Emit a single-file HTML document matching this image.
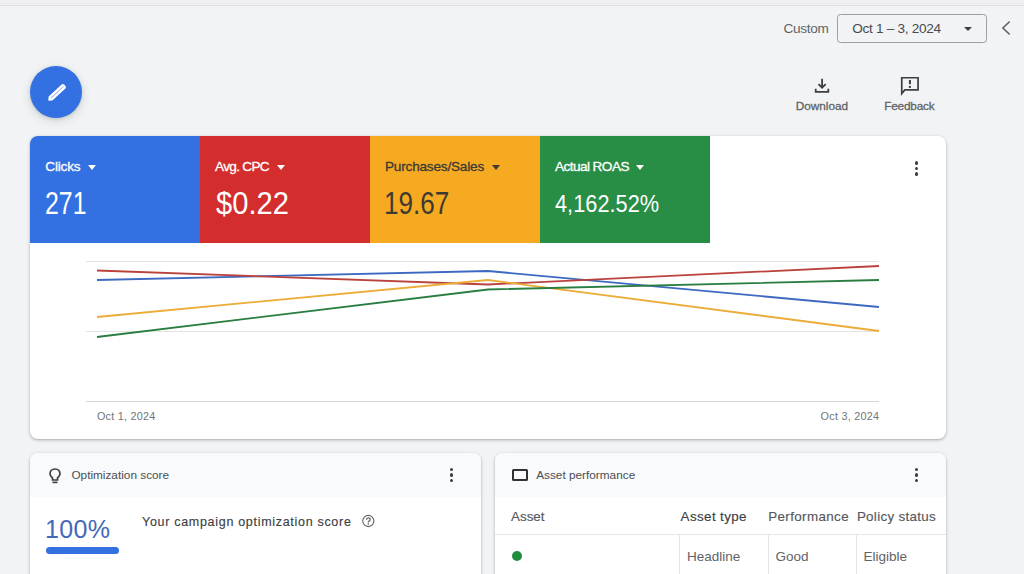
<!DOCTYPE html>
<html><head><meta charset="utf-8">
<style>
*{box-sizing:border-box;margin:0;padding:0}
html,body{width:1024px;height:574px;overflow:hidden;background:#f1f3f4;font-family:"Liberation Sans",sans-serif;position:relative}
.a{position:absolute;white-space:nowrap}
.t{position:absolute;white-space:nowrap;line-height:1}
.m{-webkit-text-stroke:0.3px currentColor}
.m2{-webkit-text-stroke:0.15px currentColor}
#topline{left:0;top:5px;width:1024px;height:1px;background:#dfe0e3}
#topband{left:0;top:0;width:1024px;height:5px;background:#f0f0f2}
.card{position:absolute;background:#fff;border-radius:8px;box-shadow:0 1px 2px rgba(60,64,67,.25),0 1px 3px 1px rgba(60,64,67,.12);overflow:hidden}
.tile{position:absolute;top:0;width:170px;height:107px}
.kebab{position:absolute;width:4px;height:15px}
.kebab i{position:absolute;left:0.2px;width:3.7px;height:3.7px;border-radius:50%;background:#3c4043}
.tri{position:absolute;width:0;height:0;border-left:4.5px solid transparent;border-right:4.5px solid transparent;border-top:5px solid #fff}
</style></head><body>
<div class="a" id="topband"></div>
<div class="a" id="topline"></div>
<div class="a" style="left:0;top:3px;width:1024px;height:1px;background:#ebebed"></div>

<!-- date picker -->
<div class="t" style="left:783.5px;top:22px;font-size:13.6px;color:#5f6368;letter-spacing:-0.3px">Custom</div>
<div class="a" style="left:837px;top:14px;width:150px;height:29px;border:1px solid #9aa0a6;border-radius:3.5px"></div>
<div class="t" style="left:852.3px;top:22px;font-size:13.6px;color:#474b4f;letter-spacing:-0.3px">Oct 1 – 3, 2024</div>
<div class="tri" style="left:964.3px;top:26.8px;border-top-color:#3c4043;border-left-width:4px;border-right-width:4px;border-top-width:4.5px"></div>
<svg class="a" style="left:998px;top:18px" width="18" height="20" viewBox="0 0 18 20"><path d="M11.7 3.5 L4.9 10 L11.7 16.5" fill="none" stroke="#5f6368" stroke-width="1.6"/></svg>

<!-- FAB -->
<div class="a" style="left:30px;top:66px;width:52px;height:52px;border-radius:50%;background:#3370e2;box-shadow:0 1px 3px rgba(60,64,67,.22),0 3px 8px 2px rgba(60,64,67,.1)"></div>
<svg class="a" style="left:44px;top:80px" width="26" height="26" viewBox="0 0 26 26"><g transform="translate(12.5,13) rotate(-43)"><path d="M-11.2 0 L-8.2 -2.7 H9.6 Q11.3 -2.7 11.3 -1 V1 Q11.3 2.7 9.6 2.7 H-8.2 Z" fill="#fff"/><path d="M-7.5 0 H9.5" stroke="#6a93e6" stroke-width="0.8"/></g></svg>

<!-- download / feedback -->
<svg class="a" style="left:813px;top:77px" width="18" height="18" viewBox="0 0 18 18"><path d="M9.1 1.8 V10.8 M5.5 7.1 L9.1 10.7 L12.7 7.1" fill="none" stroke="#3c4043" stroke-width="1.8"/><path d="M2.7 11.8 V14.8 H15.3 V11.8" fill="none" stroke="#3c4043" stroke-width="1.8"/></svg>
<div class="t m" style="left:795.7px;top:101.1px;font-size:11.8px;color:#5f6368">Download</div>
<svg class="a" style="left:899px;top:76px" width="21" height="21" viewBox="0 0 21 21"><path d="M2.75 17.6 V1.75 H19.05 V13.95 H5.8 Z" fill="none" stroke="#3c4043" stroke-width="1.7" stroke-linejoin="miter"/><rect x="9.9" y="4" width="2" height="4.2" fill="#3c4043"/><rect x="9.9" y="9.9" width="2" height="2" fill="#3c4043"/></svg>
<div class="t m" style="left:884.2px;top:101.1px;font-size:11.8px;color:#5f6368;letter-spacing:-0.2px">Feedback</div>

<!-- main card -->
<div class="card" style="left:30px;top:136px;width:916px;height:303px">
  <div class="tile" style="left:0;background:#3370e2"></div>
  <div class="tile" style="left:170px;background:#d42d2e"></div>
  <div class="tile" style="left:340px;background:#f5aa22"></div>
  <div class="tile" style="left:510px;background:#288d45"></div>
</div>
<div class="t m" style="left:45.3px;top:159.8px;font-size:13.6px;color:#fff;letter-spacing:-0.2px">Clicks</div>
<div class="tri" style="left:88px;top:165px"></div>
<div class="t" style="left:45px;top:187.8px;font-size:30.5px;color:#fff;transform:scaleX(0.815);transform-origin:0 0">271</div>
<div class="t m" style="left:215.1px;top:159.8px;font-size:13.6px;color:#fff;letter-spacing:-0.7px">Avg. CPC</div>
<div class="tri" style="left:276.5px;top:165px"></div>
<div class="t" style="left:215.5px;top:187.5px;font-size:30.5px;color:#fff;transform:scaleX(0.955);transform-origin:0 0">$0.22</div>
<div class="t m" style="left:385px;top:159.8px;font-size:13.6px;color:#3c3a33;letter-spacing:-0.2px">Purchases/Sales</div>
<div class="tri" style="left:491.5px;top:165px;border-top-color:#3c3a33"></div>
<div class="t" style="left:383.8px;top:187.6px;font-size:30.5px;color:#3c3a33;transform:scaleX(0.855);transform-origin:0 0">19.67</div>
<div class="t m" style="left:554.9px;top:159.8px;font-size:13.6px;color:#fff;letter-spacing:-0.55px">Actual ROAS</div>
<div class="tri" style="left:636px;top:165px"></div>
<div class="t" style="left:555px;top:191.8px;font-size:24.5px;color:#fff;transform:scaleX(0.889);transform-origin:0 0">4,162.52%</div>

<div class="kebab" style="left:914.5px;top:161px"><i style="top:0"></i><i style="top:5.5px"></i><i style="top:11px"></i></div>

<!-- chart -->
<svg class="a" style="left:0;top:0" width="1024" height="574">
  <g stroke="#e3e3e3" stroke-width="1">
    <line x1="86" y1="261.5" x2="879" y2="261.5"/>
    <line x1="86" y1="331.5" x2="879" y2="331.5"/>
    <line x1="86" y1="401.5" x2="879" y2="401.5" stroke="#d6d6d6"/>
  </g>
  <g fill="none" stroke-width="1.8" stroke-linejoin="round">
    <polyline points="97,280 488,271 879,307" stroke="#3d69c1"/>
    <polyline points="97,270.5 488,284.5 879,266" stroke="#b9423c"/>
    <polyline points="97,317 488,280 879,331" stroke="#ebac38"/>
    <polyline points="97,337 488,289.5 879,280" stroke="#2a7e42"/>
  </g>
</svg>
<div class="t" style="left:96.9px;top:410.8px;font-size:10.8px;color:#70757a;letter-spacing:0.25px">Oct 1, 2024</div>
<div class="t" style="left:820.6px;top:410.8px;font-size:10.8px;color:#70757a;letter-spacing:0.25px">Oct 3, 2024</div>

<!-- optimization card -->
<div class="card" style="left:30px;top:453px;width:451px;height:140px">
  <div class="a" style="left:0;top:0;width:451px;height:44px;background:#f9fafb"></div>
</div>
<svg class="a" style="left:47px;top:467px" width="16" height="18" viewBox="0 0 16 18"><path d="M8 2 C4.8 2 3 4.2 3 6.8 C3 8.8 4.2 10 5.5 11 V13 H10.5 V11 C11.8 10 13 8.8 13 6.8 C13 4.2 11.2 2 8 2 Z" fill="none" stroke="#3c4043" stroke-width="1.7"/><rect x="5.5" y="14.6" width="5" height="1.6" fill="#3c4043"/></svg>
<div class="t" style="left:71.4px;top:469.6px;font-size:11.8px;color:#4a4e52">Optimization score</div>
<div class="kebab" style="left:449.5px;top:467.5px"><i style="top:0"></i><i style="top:5.5px"></i><i style="top:11px"></i></div>
<div class="t" style="left:45.1px;top:516.6px;font-size:25px;color:#4468b8;letter-spacing:0.3px">100%</div>
<div class="a" style="left:46px;top:547px;width:73px;height:7px;border-radius:4px;background:#3370e2"></div>
<div class="t m2" style="left:142px;top:515.9px;font-size:12.5px;color:#3c4043;letter-spacing:0.7px">Your campaign optimization score</div>
<svg class="a" style="left:360.5px;top:514px" width="15" height="15" viewBox="0 0 15 15"><circle cx="7.3" cy="7" r="5.6" fill="none" stroke="#5f6368" stroke-width="1.1"/><path d="M5.5 5.7 Q5.6 3.8 7.3 3.8 Q9.2 3.8 9.2 5.5 Q9.2 6.5 8.1 7.1 Q7.3 7.5 7.3 8.5" fill="none" stroke="#5f6368" stroke-width="1.3"/><circle cx="7.3" cy="10.1" r="0.8" fill="#5f6368"/></svg>

<!-- asset performance card -->
<div class="card" style="left:495px;top:453px;width:451px;height:140px">
  <div class="a" style="left:0;top:0;width:451px;height:44px;background:#f9fafb"></div>
  <div class="a" style="left:0;top:81px;width:451px;height:1px;background:#e3e5e8"></div>
  <div class="a" style="left:184px;top:82px;width:1px;height:60px;background:#e3e5e8"></div>
  <div class="a" style="left:273px;top:82px;width:1px;height:60px;background:#e3e5e8"></div>
  <div class="a" style="left:361px;top:82px;width:1px;height:60px;background:#e3e5e8"></div>
</div>
<div class="a" style="left:512px;top:469px;width:15.6px;height:12px;border:2px solid #303336;border-top-width:2.8px;border-radius:1.5px"></div>
<div class="t" style="left:536.2px;top:469.8px;font-size:11.8px;color:#4a4e52">Asset performance</div>
<div class="kebab" style="left:914.5px;top:467.5px"><i style="top:0"></i><i style="top:5.5px"></i><i style="top:11px"></i></div>
<div class="t m2" style="left:511px;top:509.9px;font-size:13.4px;color:#54585c">Asset</div>
<div class="t m2" style="left:680.6px;top:509.9px;font-size:13.4px;color:#3c4043;letter-spacing:0.38px">Asset type</div>
<div class="t m2" style="left:768.2px;top:509.9px;font-size:13.4px;color:#54585c;letter-spacing:0.38px">Performance</div>
<div class="t m2" style="left:856.9px;top:509.9px;font-size:13.4px;color:#54585c;letter-spacing:0.3px">Policy status</div>
<div class="a" style="left:512px;top:551px;width:10px;height:10px;border-radius:50%;background:#1e8e3e"></div>
<div class="t" style="left:686.9px;top:549.5px;font-size:13.5px;color:#5f6368">Headline</div>
<div class="t" style="left:775.6px;top:549.5px;font-size:13.5px;color:#5f6368">Good</div>
<div class="t" style="left:863.6px;top:549.5px;font-size:13.5px;color:#5f6368">Eligible</div>
</body></html>
